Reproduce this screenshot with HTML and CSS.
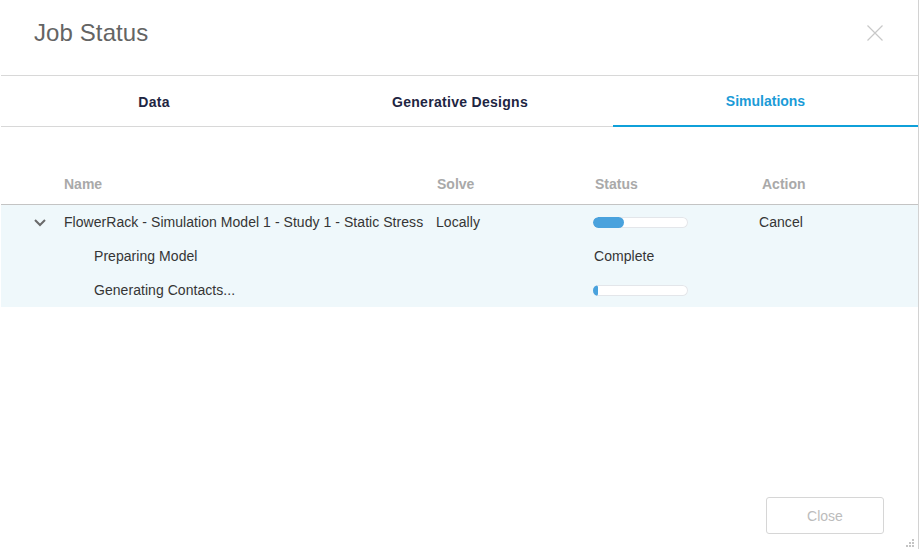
FILE: index.html
```html
<!DOCTYPE html>
<html>
<head>
<meta charset="utf-8">
<link rel="stylesheet" href="styles.css">
</head>
<body>
<div class="dialog">
  <div class="header">
    <h1 class="title">Job Status</h1>
    <svg class="close-x" width="16" height="16" viewBox="0 0 16 16"><path d="M0.5 0.5 L15.5 15.5 M15.5 0.5 L0.5 15.5" stroke="#c8c8c8" stroke-width="1.2" fill="none"/></svg>
  </div>
  <div class="tabs">
    <div class="tab">Data</div>
    <div class="tab">Generative Designs</div>
    <div class="tab active">Simulations</div>
  </div>
  <div class="table">
    <div class="thead">
      <div></div>
      <div class="th">Name</div>
      <div class="th th-solve">Solve</div>
      <div class="th th-status">Status</div>
      <div class="th th-action">Action</div>
    </div>
    <div class="tbody">
      <div class="row">
        <div class="chev"><svg width="12" height="8" viewBox="0 0 12 8"><path d="M1 1 L6 6 L11 1" stroke="#6a6a6a" stroke-width="2" fill="none"/></svg></div>
        <div class="cell">FlowerRack - Simulation Model 1 - Study 1 - Static Stress</div>
        <div class="cell">Locally</div>
        <div class="cell"><div class="bar"><div class="fill" style="width:31px"></div></div></div>
        <div class="cell cancel">Cancel</div>
      </div>
      <div class="row">
        <div></div>
        <div class="cell sub">Preparing Model</div>
        <div class="cell"></div>
        <div class="cell">Complete</div>
        <div class="cell"></div>
      </div>
      <div class="row">
        <div></div>
        <div class="cell sub">Generating Contacts...</div>
        <div class="cell"></div>
        <div class="cell"><div class="bar"><div class="fill" style="width:5px"></div></div></div>
        <div class="cell"></div>
      </div>
    </div>
  </div>
  <div class="footer">
    <button class="btn">Close</button>
  </div>
  <div class="grip">
    <span class="d d1"></span>
    <span class="d d2"></span><span class="d d3"></span>
    <span class="d d4"></span><span class="d d5"></span><span class="d d6"></span>
  </div>
</div>
</body>
</html>
```
FILE: styles.css
```css
html, body {
  margin: 0;
  padding: 0;
  background: #ffffff;
}
body {
  font-family: "Liberation Sans", Arial, sans-serif;
}
.dialog {
  position: relative;
  width: 919px;
  height: 549px;
  box-sizing: border-box;
  border-left: 1px solid #ffffff;
  border-right: 1px solid #d2d2d2;
  display: flex;
  flex-direction: column;
  background: #fff;
}
.header {
  height: 76px;
  box-sizing: border-box;
  border-bottom: 1px solid #d8d8d8;
  padding: 21px 35px 0 33px;
  display: flex;
  align-items: flex-start;
  justify-content: space-between;
  flex: none;
}
.title {
  margin: 0;
  font-size: 24px;
  line-height: 24px;
  font-weight: normal;
  color: #646464;
  letter-spacing: 0.1px;
}
.close-x {
  margin-top: 4px;
  display: block;
}
.tabs {
  display: grid;
  grid-template-columns: 306px 306px 1fr;
  height: 51px;
  box-sizing: border-box;
  border-bottom: 1px solid #d8d8d8;
  flex: none;
}
.tab {
  position: relative;
  display: flex;
  align-items: center;
  justify-content: center;
  font-size: 14px;
  font-weight: bold;
  color: #1e2542;
  padding-top: 2px;
  letter-spacing: 0.3px;
}
.tab.active {
  color: #1b9bd7;
  padding-top: 0;
  letter-spacing: 0;
}
.tab.active::after {
  content: "";
  position: absolute;
  left: 0;
  right: 0;
  bottom: -1px;
  height: 2px;
  background: #0fa0d9;
}
.table {
  margin-top: 37px;
  flex: none;
}
.thead, .row {
  display: grid;
  grid-template-columns: 63px 372px 158px 166px 1fr;
  align-items: center;
}
.thead {
  height: 41px;
  box-sizing: border-box;
  border-bottom: 1px solid #c4c4c4;
}
.th {
  font-size: 14px;
  font-weight: bold;
  color: #a9a9a9;
}
.th-solve { padding-left: 1px; }
.th-status { padding-left: 1px; }
.th-action { padding-left: 2px; }
.tbody {
  background: #eff8fb;
}
.row {
  height: 34px;
}
.cell {
  font-size: 14px;
  color: #353535;
  white-space: nowrap;
  letter-spacing: 0.05px;
}
.cell.sub {
  padding-left: 30px;
}
.cancel {
  margin-left: -1px;
}
.chev {
  display: flex;
  justify-content: flex-start;
  padding-left: 33px;
  padding-top: 1px;
}
.chev svg { display: block; }
.bar {
  width: 95px;
  height: 11px;
  margin-left: -1px;
  border-radius: 6px;
  background: #ffffff;
  box-shadow: inset 0 0 0 1px #e3e6ea;
  overflow: hidden;
  display: flex;
}
.fill {
  height: 100%;
  background: #49a2dd;
  border-radius: 6px;
}
.footer {
  margin-top: auto;
  display: flex;
  justify-content: flex-end;
  padding: 0 34px 15px 0;
}
.btn {
  width: 118px;
  height: 37px;
  border: 1px solid #d6d6d6;
  border-radius: 3px;
  background: #ffffff;
  color: #bcbcbc;
  font-family: "Liberation Sans", Arial, sans-serif;
  font-size: 14px;
  padding: 0;
}
.grip {
  position: absolute;
  right: 4px;
  bottom: 2px;
  width: 8px;
  height: 8px;
  display: grid;
  grid-template-columns: 2px 2px 2px;
  grid-template-rows: 2px 2px 2px;
  gap: 1px;
}
.d { background: #c4c4c4; }
.d1 { grid-column: 3; grid-row: 1; }
.d2 { grid-column: 2; grid-row: 2; }
.d3 { grid-column: 3; grid-row: 2; }
.d4 { grid-column: 1; grid-row: 3; }
.d5 { grid-column: 2; grid-row: 3; }
.d6 { grid-column: 3; grid-row: 3; }
```
